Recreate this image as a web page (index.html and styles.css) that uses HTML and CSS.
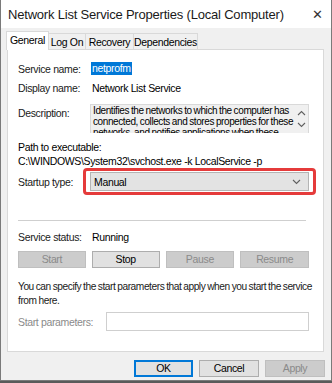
FILE: index.html
```html
<!DOCTYPE html>
<html>
  <head>
    <meta charset="UTF-8">
    <link rel="stylesheet" href="styles.css">
  </head>
  <body>
    <div class="window">
      <div class="titlebar">
        <span class="title">Network List Service Properties (Local Computer)</span>
        <span class="close">✕</span>
      </div>
      <div class="dialog">
        <div class="tabs">
          <span class="tab tab-general active">General</span>
          <span class="tab tab-logon">Log On</span>
          <span class="tab tab-recovery">Recovery</span>
          <span class="tab tab-deps">Dependencies</span>
        </div>
        <div class="panel">
          <div class="row row-name">
            <span class="label">Service name:</span>
            <span class="selected">netprofm</span>
          </div>
          <div class="row row-display">
            <span class="label">Display name:</span>
            <span>Network List Service</span>
          </div>
          <div class="row row-desc">
            <span class="label">Description:</span>
            <div class="desc-box">
              <div class="desc-text">Identifies the networks to which the computer has connected, collects and stores properties for these networks, and notifies applications when these properties change.</div>
              <div class="desc-scroll">
                <svg width="9" height="6" viewBox="0 0 9 6"><path d="M1 5 L4.5 1.5 L8 5" fill="none" stroke="#606060" stroke-width="1.1"/></svg>
                <svg width="9" height="6" viewBox="0 0 9 6"><path d="M1 1 L4.5 4.5 L8 1" fill="none" stroke="#606060" stroke-width="1.1"/></svg>
              </div>
            </div>
          </div>
          <div class="path-label">Path to executable:</div>
          <div class="path-value">C:\WINDOWS\System32\svchost.exe -k LocalService -p</div>
          <div class="row row-startup">
            <span class="label">Startup type:</span>
            <div class="highlight">
              <div class="combo">
                <span>Manual</span>
                <svg width="9" height="6" viewBox="0 0 9 6"><path d="M1 1 L4.5 4.5 L8 1" fill="none" stroke="#606060" stroke-width="1.1"/></svg>
              </div>
            </div>
          </div>
          <div class="separator"></div>
          <div class="row row-status">
            <span class="label">Service status:</span>
            <span>Running</span>
          </div>
          <div class="buttons">
            <span class="btn disabled">Start</span>
            <span class="btn">Stop</span>
            <span class="btn disabled">Pause</span>
            <span class="btn disabled">Resume</span>
          </div>
          <div class="note">You can specify the start parameters that apply when you start the service from here.</div>
          <div class="row row-params">
            <span class="label disabled-text">Start parameters:</span>
            <span class="input"></span>
          </div>
        </div>
        <div class="footer">
          <span class="btn footer-btn default">OK</span>
          <span class="btn footer-btn">Cancel</span>
          <span class="btn footer-btn disabled">Apply</span>
        </div>
      </div>
    </div>
  </body>
</html>
```

FILE: styles.css
```css
body {
  margin: 0;
  width: 332px;
  height: 383px;
  overflow: hidden;
  background: #5a5a5a;
  font-family: "Liberation Sans", Arial, sans-serif;
  font-size: 10.5px;
  letter-spacing: -0.35px;
  color: #000;
}
.window {
  width: 332px;
  height: 381px;
  box-sizing: border-box;
  border: 1px solid #7a7a7a;
  border-top: none;
  background: #f0f0f0;
  display: flex;
  flex-direction: column;
}
.titlebar {
  height: 28px;
  flex: none;
  background: #fff;
  display: flex;
  align-items: center;
  justify-content: space-between;
  padding: 0 8px 0 7px;
  white-space: nowrap;
}
.title {
  font-size: 13px;
  letter-spacing: -0.2px;
  color: #1a1a1a;
}
.close {
  font-size: 13px;
  letter-spacing: 0;
  color: #333;
}
.dialog {
  flex: 1;
  display: flex;
  flex-direction: column;
  padding: 2px 6px 0 5px;
}
.tabs {
  display: flex;
  height: 19px;
  align-items: flex-end;
  white-space: nowrap;
}
.tab {
  height: 16px;
  line-height: 16px;
  box-sizing: border-box;
  text-align: center;
  border: 1px solid #d9d9d9;
  border-bottom: none;
  background: #f0f0f0;
  margin-left: -1px;
}
.tab-general {
  width: 43px;
  margin-left: 0;
}
.tab-logon {
  width: 38px;
}
.tab-recovery {
  width: 49px;
}
.tab-deps {
  width: 65px;
}
.tab.active {
  height: 19px;
  line-height: 17px;
  background: #fff;
  position: relative;
  z-index: 1;
  margin-bottom: -1px;
}
.panel {
  height: 303px;
  background: #fff;
  border: 1px solid #d9d9d9;
  margin: 0 1px 0 1px;
  box-sizing: border-box;
  display: flex;
  flex-direction: column;
  padding: 0 14px 0 10px;
  white-space: nowrap;
}
.row {
  display: flex;
  align-items: center;
}
.label {
  width: 74px;
  flex: none;
  color: #1a1a1a;
}
.row-name {
  margin-top: 12px;
  height: 13px;
}
.selected {
  background: #0078d7;
  color: #fff;
  padding: 0 1px;
  margin-left: -1px;
  line-height: 13px;
}
.row-display {
  margin-top: 6px;
  height: 14px;
}
.row-desc {
  margin-top: 9px;
  align-items: flex-start;
}
.row-desc .label {
  margin-top: 2px;
  line-height: 14px;
}
.desc-box {
  flex: 1;
  height: 29px;
  margin-left: -2px;
  box-sizing: border-box;
  border: 1px solid #d9d9d9;
  border-bottom: none;
  background: #f0f0f0;
  display: flex;
  overflow: hidden;
}
.desc-text {
  flex: 1;
  padding: 0 0 0 2px;
  font-size: 10px;
  line-height: 11px;
  letter-spacing: -0.4px;
  word-spacing: -0.5px;
  white-space: normal;
}
.desc-scroll {
  width: 13px;
  flex: none;
  display: flex;
  flex-direction: column;
  align-items: center;
  gap: 6px;
  padding-top: 5px;
}
.path-label {
  margin-top: 7px;
  height: 14px;
  line-height: 14px;
}
.path-value {
  height: 14px;
  line-height: 14px;
}
.row-startup {
  margin-top: 0;
}
.row-startup .label {
  width: 65px;
}
.highlight {
  flex: 1;
  margin-right: -7px;
  border: 3px solid #e53b3b;
  border-radius: 4px;
  padding: 1px 4px;
}
.combo {
  height: 17px;
  background: #e3e3e3;
  border: 1px solid #b4b4b4;
  display: flex;
  align-items: center;
  justify-content: space-between;
  padding: 0 7px 0 3px;
}
.separator {
  margin-top: 25px;
  border-top: 1px solid #cfcfcf;
  margin-right: 3px;
}
.row-status {
  margin-top: 9px;
  height: 14px;
}
.buttons {
  display: flex;
  gap: 6px;
  margin-top: 7px;
}
.btn {
  height: 17px;
  line-height: 15px;
  box-sizing: border-box;
  text-align: center;
  background: #e1e1e1;
  border: 1px solid #adadad;
  color: #000;
}
.buttons .btn {
  width: 68px;
}
.buttons .btn:nth-child(3),
.buttons .btn:nth-child(4) {
  width: 69px;
}
.btn.disabled {
  background: #cccccc;
  border-color: #bfbfbf;
  color: #8a8a8a;
}
.note {
  margin-top: 12px;
  line-height: 14px;
  font-size: 10.2px;
  color: #1a1a1a;
  letter-spacing: -0.45px;
  word-spacing: -0.5px;
  white-space: normal;
  margin-right: -8px;
}
.row-params {
  margin-top: 4px;
}
.disabled-text {
  width: 88px;
  color: #8a8a8a;
}
.input {
  flex: 1;
  height: 19px;
  border: 1px solid #cfcfcf;
  box-sizing: border-box;
}
.footer {
  display: flex;
  justify-content: flex-end;
  gap: 6px;
  margin-top: 8px;
}
.footer-btn {
  width: 60px;
  height: 17px;
}
.footer-btn.default {
  border: 2px solid #0078d7;
  line-height: 13px;
  width: 59px;
}
```
